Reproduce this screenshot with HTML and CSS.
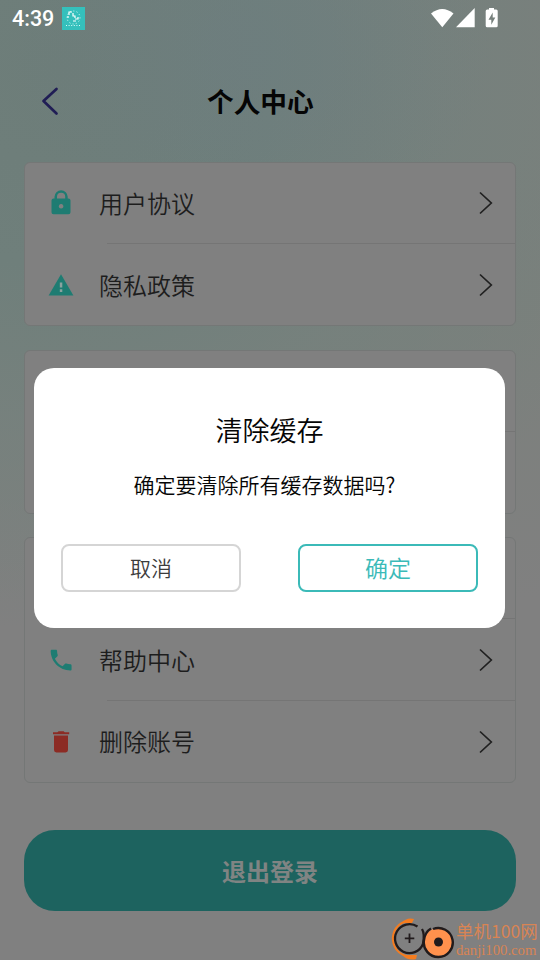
FILE: index.html
```html
<!DOCTYPE html>
<html lang="zh-CN">
<head>
<meta charset="utf-8">
<title>个人中心</title>
<link rel="stylesheet" href="styles.css">
</head>
<body>
<div class="screen">
  <header class="status">
    <span class="time">4:39</span>
    <svg class="app-badge" viewBox="0 0 23 23"><rect width="23" height="23" fill="#35c0bc"/><circle cx="11.5" cy="10.5" r="6.5" fill="none" stroke="#d9fffb" stroke-dasharray="1 2.3"/><path d="M7 8V5h3M11 6v3h2v2M13 12h3v-2M14 14h-3M6 9v2" fill="none" stroke="#fff" stroke-width="1.2"/><path d="M4 18.5h15" stroke="#d9fffb" stroke-dasharray="1 1.6"/></svg>
    <span class="spacer"></span>
    <svg class="signals" viewBox="0 0 70 24" fill="#fff"><path d="M0 5.500Q11.300-3.500 22.500 5.500L11.300 19.200Z"/><path d="M25 19.200L43.700 0v19.200Z"/><path fill-rule="evenodd" d="M58 0h5v1.600h2.200q1.500 0 1.500 1.500v14.600q0 1.500-1.500 1.500H56.200q-1.500 0-1.500-1.500V3.100q0-1.500 1.500-1.500H58ZM61.700 4.500L57.500 11.700h2.800v5l4-7.200h-2.600Z"/></svg>
  </header>
  <nav class="nav">
    <svg class="back" viewBox="0 0 18 30"><path d="M15.500 3L2.500 15L15.500 27.500" fill="none" stroke="#201d55" stroke-width="2.700" stroke-linecap="round" stroke-linejoin="round"/></svg>
    <h1>个人中心</h1>
  </nav>
  <main class="cards">
    <section class="card two">
      <div class="row">
        <svg class="icon" viewBox="0 0 28 28"><path fill="#1e7c72" fill-rule="evenodd" d="M7.500 9.500V7.800a6.600 6.600 0 0 1 13.200 0v1.700h.8q2 0 2 2v11.800q0 2-2 2H6.500q-2 0-2-2V11.500q0-2 2-2ZM10 9.500h8.200V7.800a4.100 4.100 0 0 0-8.200 0ZM14.100 15a2.300 2.300 0 1 0 .01 0Z"/></svg>
        <span class="label">用户协议</span>
        <svg class="chevron" viewBox="0 0 14 24"><path d="M1 1.500L12.300 12L1 22.500"/></svg>
      </div>
      <div class="row">
        <svg class="icon" viewBox="0 0 28 28"><path fill="#1e7c72" d="M14 3.200L26.400 24.500H1.600Z"/><path fill="#8aa29f" d="M12.800 11.600h2.500v5h-2.500zM12.800 18.300h2.500v2.600h-2.500z"/></svg>
        <span class="label">隐私政策</span>
        <svg class="chevron" viewBox="0 0 14 24"><path d="M1 1.500L12.300 12L1 22.500"/></svg>
      </div>
    </section>
    <section class="card two"><div class="row"></div><div class="row"></div></section>
    <section class="card three">
      <div class="row"></div>
      <div class="row">
        <svg class="icon" viewBox="0 0 28 28"><path fill="#1e7c72" transform="translate(.2 .2) scale(1.16)" d="M6.620 10.790c1.440 2.830 3.760 5.140 6.590 6.590l2.200-2.200c.27-.27.670-.36 1.020-.24 1.120.37 2.330.57 3.570.57.550 0 1 .45 1 1V20c0 .55-.45 1-1 1-9.390 0-17-7.610-17-17 0-.55.450-1 1-1h3.500c.550 0 1 .45 1 1 0 1.250.2 2.450.570 3.570.110.350.030.740-.25 1.020l-2.200 2.200z"/></svg>
        <span class="label">帮助中心</span>
        <svg class="chevron" viewBox="0 0 14 24"><path d="M1 1.500L12.300 12L1 22.500"/></svg>
      </div>
      <div class="row">
        <svg class="icon" viewBox="0 0 28 28"><path fill="#8c2b24" d="M7 7.500h14v14.500q0 2.400-2.400 2.400h-9.200q-2.400 0-2.400-2.400ZM6 4.200h4.400l1.200-.9h5l1.200.9h4.400v2.100H6Z"/></svg>
        <span class="label">删除账号</span>
        <svg class="chevron" viewBox="0 0 14 24"><path d="M1 1.500L12.300 12L1 22.500"/></svg>
      </div>
    </section>
  </main>
  <div class="logout">退出登录</div>
  <div class="dialog" role="dialog">
    <h2>清除缓存</h2>
    <p>确定要清除所有缓存数据吗?</p>
    <div class="actions">
      <div class="btn cancel">取消</div>
      <div class="btn confirm">确定</div>
    </div>
  </div>
  <div class="brand">
    <svg viewBox="0 0 64 44" fill="none"><path d="M18 3C6 4 1.500 14 2 22c1 10 8 17 22 17" stroke="#f57c1f" stroke-width="2.200"/><path d="M10 5q6-6 13-4l-2 4ZM11 37q6 6 14 4l1-4Z" fill="#f57c1f"/><path d="M26.500 8.500A14.500 14.500 0 1 0 32 26" stroke="#211b1c" stroke-width="2.300"/><path d="M18.500 15.500v9.500M13.800 20.300h9.500" stroke="#211b1c" stroke-width="1.800"/><circle cx="47.500" cy="24" r="14" fill="#ff914d"/><path d="M42 11A14.500 14.500 0 1 1 33 22Q34 14 40 10.500" stroke="#211b1c" stroke-width="2.400"/><circle cx="47.500" cy="24" r="4.500" fill="#211b1c"/><path d="M31 11q3 5 1 15" stroke="#211b1c" stroke-width="2.300"/></svg>
    <div class="brand-text"><span class="cn">单机100网</span><span class="url">danji100.com</span></div>
  </div>
</div>
</body>
</html>
```

FILE: styles.css
```css
* { box-sizing: border-box; }
body { margin: 0; font-family: "Noto Sans CJK SC", sans-serif; }
.screen {
  position: relative;
  width: 540px;
  height: 960px;
  overflow: hidden;
  display: flex;
  flex-direction: column;
  background:
    radial-gradient(ellipse 240px 200px at 250px 50px, rgba(108,125,129,.5), transparent),
    radial-gradient(ellipse 620px 560px at 60px 70px, #6d7d79 0%, #6f7f7b 35%, rgba(116,129,125,.75) 62%, transparent 100%),
    linear-gradient(#7b7f7c 0, #7b807c 300px, #808080 600px);
}
.status {
  height: 38px;
  display: flex;
  align-items: center;
  padding-left: 12px;
  padding-right: 29px;
}
.time { font: 500 21.500px/38px Roboto, sans-serif; color: #fff; width: 50px; }
.app-badge { width: 23px; height: 23px; margin-top: -1px; }
.spacer { flex: 1; }
.signals { width: 70px; height: 24px; margin-top: 2px; margin-right: 10px; }
.nav { height: 124px; padding: 48px 0 0 41px; display: flex; align-items: flex-start; }
.back { width: 18px; height: 30px; }
h1 { margin: 0 0 0 148px; font-size: 26.700px; line-height: 30px; font-weight: 700; color: #050505; }
.cards { display: grid; gap: 24px; padding: 0 24px; }
.card {
  display: grid;
  grid-auto-rows: 1fr;
  background: #808080;
  border: 1px solid #747776;
  border-radius: 6px;
}
.two { height: 164px; }
.two + .three { margin-top: -1px; }
.three { height: 246px; margin-bottom: -1px; }
.row { display: flex; align-items: center; padding: 0 22px 1px; background: linear-gradient(#757575, #757575) right bottom / 408px 1px no-repeat; }
.row + .row { padding-bottom: 0; padding-top: 1px; }
.row:last-child { background: none; }
.icon { width: 28px; height: 28px; }
.label { margin-left: 24px; font-size: 24px; line-height: 34px; margin-top: -1px; font-weight: 350; color: #1d1d1d; flex: 1; }
.chevron { width: 14px; height: 24px; fill: none; stroke: #202020; stroke-width: 1.700; }
.logout {
  margin: 48px 24px 0;
  height: 81px;
  border-radius: 31px;
  background: #1d635f;
  color: #808483;
  font-size: 24px;
  line-height: 81px;
  font-weight: 700;
  text-align: center;
}
.dialog {
  position: absolute;
  left: 34px;
  top: 368px;
  width: 471px;
  height: 260px;
  padding: 43px 27px 0;
  border-radius: 20px;
  background: #fff;
  color: #050505;
  text-align: center;
}
h2 { margin: 0; font-size: 27px; line-height: 38px; font-weight: 350; }
.dialog p { margin: 20px 10px 0 0; font-size: 21px; line-height: 30px; font-weight: 350; }
.actions { display: flex; justify-content: space-between; margin-top: 45px; }
.btn { width: 180px; height: 48px; border: 2px solid #d5d5d5; border-radius: 8px; line-height: 43px; font-weight: 350; }
.cancel { font-size: 21px; color: #3c3c3c; }
.confirm { font-size: 23px; color: #3bbab8; border-color: #3bbab8; }
.brand { position: absolute; left: 391px; top: 918px; display: flex; }
.brand svg { width: 64px; height: 44px; }
.brand-text { display: flex; flex-direction: column; padding-left: 1px; color: #d98454; white-space: nowrap; }
.cn { font-size: 17.500px; line-height: 25px; }
.url { font: 14.700px/14px "Liberation Serif", serif; }
```
